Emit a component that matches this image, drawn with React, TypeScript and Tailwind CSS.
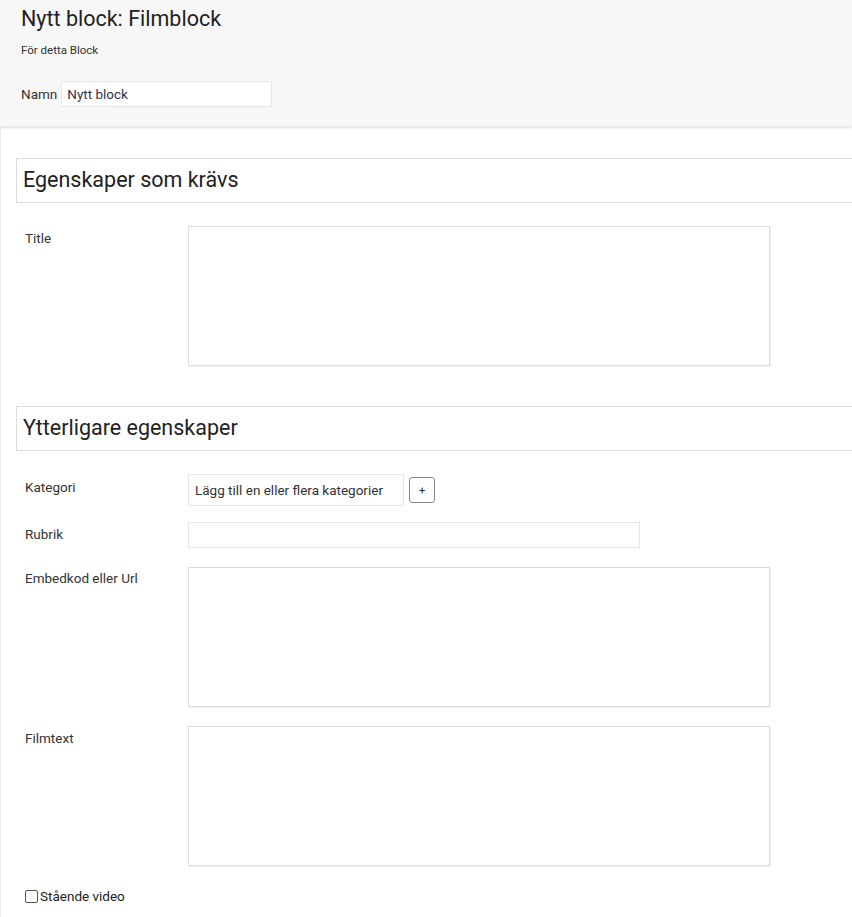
import React from "react";

const font = { fontFamily: "Roboto, 'Noto Sans', sans-serif" };

function SectionHeader({ title }: { title: string }) {
  return (
    <div className="ml-4 mr-[-20px] h-[45px] border border-[#dddddd] bg-white flex items-center pl-[6px]">
      <span className="text-[21.5px] text-[#222]">{title}</span>
    </div>
  );
}

function Row({ label, children, labelPt = "pt-[2px]" }: { label: string; children: React.ReactNode; labelPt?: string }) {
  return (
    <div className="flex">
      <div className={`w-[188px] pl-[25px] shrink-0 text-[13.5px] text-[#333] ${labelPt}`}>{label}</div>
      {children}
    </div>
  );
}

function TextArea() {
  return <div className="w-[582px] h-[140px] border border-[#dcdcdc] bg-white shadow-[1px_1px_1px_rgba(0,0,0,0.05)]" />;
}

export default function App() {
  return (
    <div className="min-h-[917px] w-[852px] overflow-hidden bg-white shadow-[inset_1px_0_0_#eeeeee]" style={font}>
      <div className="h-[126px] bg-[#f7f7f7] shadow-[0_2px_3px_rgba(0,0,0,0.12)] pl-[21px] pt-[6px]">
        <div className="text-[21.5px] text-[#222] leading-[26px]">Nytt block: Filmblock</div>
        <div className="text-[11.5px] text-[#333] mt-[11px] leading-[14px]">För detta Block</div>
        <div className="flex items-center mt-[24px]">
          <span className="text-[13.5px] text-[#333] mr-[4px]">Namn</span>
          <div className="w-[211px] h-[26px] bg-white border border-[#e6e6e6] flex items-center pl-[5px] text-[13.5px] text-[#33334d]">
            Nytt block
          </div>
        </div>
      </div>

      <div className="mt-[32px]">
        <SectionHeader title="Egenskaper som krävs" />
      </div>

      <div className="mt-[23px]">
        <Row label="Title">
          <TextArea />
        </Row>
      </div>

      <div className="mt-[40px]">
        <SectionHeader title="Ytterligare egenskaper" />
      </div>

      <div className="mt-[23px]">
        <Row label="Kategori" labelPt="pt-[3px]">
          <div className="flex items-center">
            <div className="w-[216px] h-[32px] border border-[#e6e6e6] bg-white flex items-center pl-[6px] text-[13.5px] text-[#333]">
              Lägg till en eller flera kategorier
            </div>
            <div className="ml-[5px] w-[26px] h-[26px] border border-[#888] rounded-[3px] flex items-center justify-center text-[11px] text-[#222] leading-none">
              +
            </div>
          </div>
        </Row>
      </div>

      <div className="mt-[16px]">
        <Row label="Rubrik" labelPt="pt-[2px]">
          <div className="w-[452px] h-[26px] border border-[#e6e6e6] bg-white" />
        </Row>
      </div>

      <div className="mt-[19px]">
        <Row label="Embedkod eller Url" labelPt="pt-[1px]">
          <TextArea />
        </Row>
      </div>

      <div className="mt-[19px]">
        <Row label="Filmtext">
          <TextArea />
        </Row>
      </div>

      <div className="mt-[20px] pl-[25px] flex items-center">
        <div className="w-[13px] h-[13px] border border-[#555] rounded-[2px] bg-white" />
        <span className="ml-[2px] text-[13.5px] text-[#222]">Stående video</span>
      </div>
    </div>
  );
}
